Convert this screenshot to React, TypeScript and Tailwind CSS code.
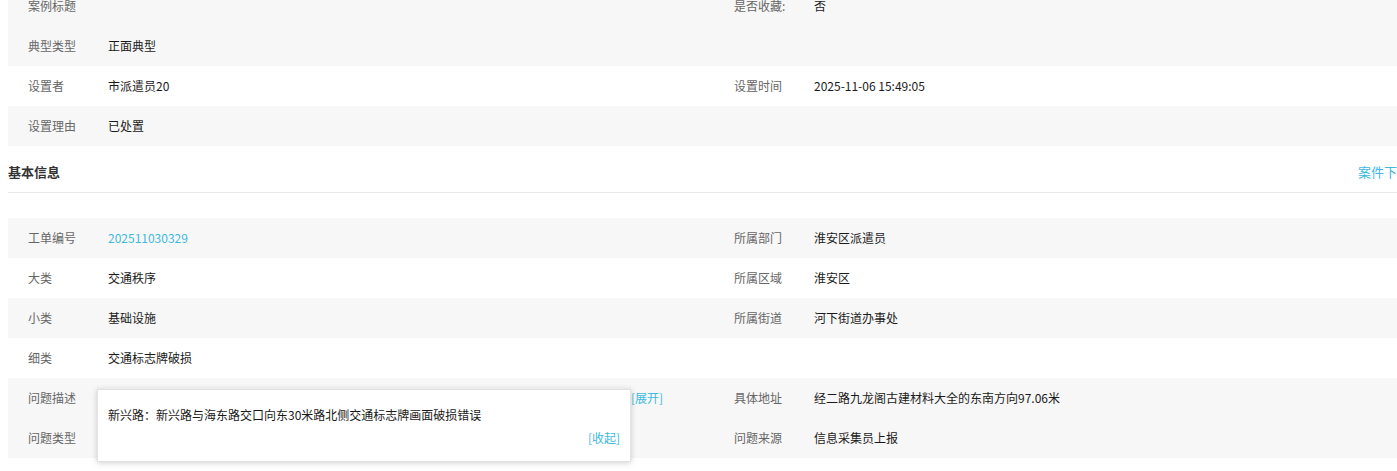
import React from "react";

type Cell = { label: string; value?: string; link?: boolean };
type Row = { left: Cell; right?: Cell; gray: boolean };

const topRows: Row[] = [
  { left: { label: "案例标题" }, right: { label: "是否收藏:", value: "否" }, gray: true },
  { left: { label: "典型类型", value: "正面典型" }, gray: true },
  { left: { label: "设置者", value: "市派遣员20" }, right: { label: "设置时间", value: "2025-11-06 15:49:05" }, gray: false },
  { left: { label: "设置理由", value: "已处置" }, gray: true },
];

const baseRows: Row[] = [
  { left: { label: "工单编号", value: "202511030329", link: true }, right: { label: "所属部门", value: "淮安区派遣员" }, gray: true },
  { left: { label: "大类", value: "交通秩序" }, right: { label: "所属区域", value: "淮安区" }, gray: false },
  { left: { label: "小类", value: "基础设施" }, right: { label: "所属街道", value: "河下街道办事处" }, gray: true },
  { left: { label: "细类", value: "交通标志牌破损" }, gray: false },
];

const desc = "新兴路：新兴路与海东路交口向东30米路北侧交通标志牌画面破损错误";

const Half = ({ cell }: { cell?: Cell }) => (
  <div className="w-[706px] flex items-center">
    {cell && (
      <>
        <div className="w-[100px] pl-5 text-[#666]">{cell.label}</div>
        <div className={cell.link ? "text-[#40b9e0]" : "text-[#1a1a1a]"}>{cell.value}</div>
      </>
    )}
  </div>
);

const InfoRow = ({ row }: { row: Row }) => (
  <div className={`h-10 flex ${row.gray ? "bg-[#f7f7f7]" : "bg-white"}`}>
    <Half cell={row.left} />
    <Half cell={row.right} />
  </div>
);

export default function App() {
  return (
    <div
      className="bg-white h-[471px] overflow-hidden text-[12px] leading-4"
      style={{ fontFamily: '"Microsoft YaHei", "Noto Sans CJK SC", sans-serif' }}
    >
      <div className="-mt-[14px] ml-2 w-[1412px]">
        {topRows.map((r, i) => (
          <InfoRow key={i} row={r} />
        ))}

        <div className="h-[47px] pt-[6px] flex items-center justify-between border-b border-[#e8e8e8] pr-[10px]">
          <span className="text-[13px] font-bold text-[#333]">基本信息</span>
          <span className="text-[13px] text-[#40b9e0]">案件下载</span>
        </div>

        <div className="mt-[25px]">
          {baseRows.map((r, i) => (
            <InfoRow key={i} row={r} />
          ))}

          <div className="relative h-10 flex bg-[#f7f7f7]">
            <div className="w-[706px] flex items-center">
              <div className="w-[100px] pl-5 text-[#666]">问题描述</div>
              <div className="w-[555px] flex items-center">
                <span className="flex-1 truncate text-[#1a1a1a]">{desc}</span>
                <span className="text-[#40b9e0]">[展开]</span>
              </div>
            </div>
            <div className="w-[706px] flex items-center">
              <div className="w-[100px] pl-5 text-[#666]">具体地址</div>
              <div className="text-[#1a1a1a]">经二路九龙阁古建材料大全的东南方向97.06米</div>
            </div>

            <div className="absolute left-[89px] top-[11px] w-[534px] h-[73px] bg-white border border-[#e2e2e2] shadow-[0_1px_6px_rgba(0,0,0,0.18)] pl-[10px] pr-[10px] pt-[17px] z-10">
              <div className="text-[#1a1a1a]">{desc}</div>
              <div className="mt-[7px] text-right text-[#40b9e0]">[收起]</div>
            </div>
          </div>

          <div className="h-10 flex bg-[#f7f7f7]">
            <Half cell={{ label: "问题类型", value: "" }} />
            <Half cell={{ label: "问题来源", value: "信息采集员上报" }} />
          </div>
        </div>
      </div>
    </div>
  );
}
